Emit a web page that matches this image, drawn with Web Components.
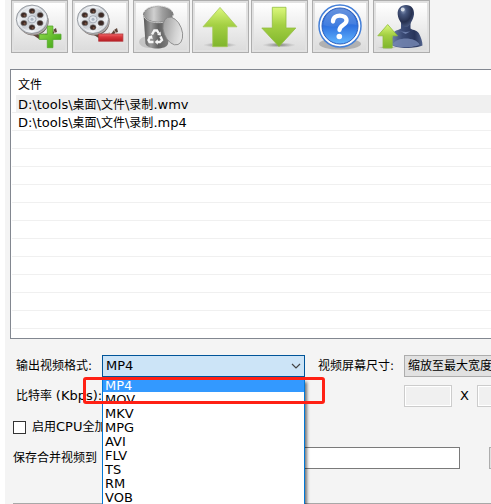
<!DOCTYPE html>
<html lang="zh-CN">
<head>
<meta charset="utf-8">
<title>视频合并</title>
<style>
  html { height: 100%; overflow: hidden; }
  body { margin: 0; min-height: 100%; overflow: hidden; background: #fff; color: #000;
    font: 12px/18px "DejaVu Sans", "Noto Sans CJK SC", sans-serif; }
</style>
</head>
<body>
<merge-window>
  <tool-bar slot="tools">
    <tool-button icon="add" label="添加"></tool-button>
    <tool-button icon="remove" label="移除"></tool-button>
    <tool-group>
      <tool-button icon="trash" label="清空"></tool-button>
      <tool-button icon="up" label="上移"></tool-button>
      <tool-button icon="down" label="下移"></tool-button>
    </tool-group>
    <tool-button icon="help" label="帮助"></tool-button>
    <tool-button icon="user" label="用户"></tool-button>
  </tool-bar>
  <file-list></file-list>
  <output-form></output-form>
</merge-window>

<script>
const define = (name, html, setup) => {
  const t = document.createElement('template');
  t.innerHTML = html;
  customElements.define(name, class extends HTMLElement {
    constructor() {
      super();
      this.attachShadow({ mode: 'open' }).append(t.content.cloneNode(true));
    }
    connectedCallback() { if (setup && !this.ready) { this.ready = true; setup(this, this.shadowRoot); } }
  });
};

define('merge-window', `
<style>
  :host { display: flex; flex-direction: column; gap: 16px; margin-left: 5px; padding-left: 5px;
    min-height: 100vh; box-sizing: border-box; background: #f4f4f4; overflow: hidden; }
</style>
<slot name="tools"></slot><slot></slot>`);

define('tool-bar', `
<style>:host { display: flex; gap: 4px; padding-left: 1px; }</style><slot></slot>`);
define('tool-group', `
<style>:host { display: flex; gap: 2px; }</style><slot></slot>`);

const green = `<linearGradient id="g" x1="0" y1="0" x2="0" y2="1"><stop offset="0" stop-color="#dcf87c"/><stop offset=".45" stop-color="#a4d043"/><stop offset="1" stop-color="#7fb52c"/></linearGradient>
<radialGradient id="sh"><stop offset="0" stop-color="#555" stop-opacity=".75"/><stop offset="1" stop-color="#888" stop-opacity="0"/></radialGradient>`;
const reel = `
<defs>
  <linearGradient id="m" x1="0" y1="0" x2="1" y2="1"><stop offset="0" stop-color="#aeb3ba"/><stop offset=".3" stop-color="#eceff3"/><stop offset=".5" stop-color="#c4c9d0"/><stop offset=".7" stop-color="#f0f2f5"/><stop offset="1" stop-color="#8e949d"/></linearGradient>
  <linearGradient id="p" x1="0" y1="0" x2="1" y2="1"><stop offset="0" stop-color="#9be052"/><stop offset="1" stop-color="#38a010"/></linearGradient>
  <linearGradient id="r" x1="0" y1="0" x2="0" y2="1"><stop offset="0" stop-color="#f06a6a"/><stop offset=".4" stop-color="#d8383c"/><stop offset="1" stop-color="#b81c22"/></linearGradient>
</defs>
<path d="M22 35c8 0 11-2 17-1l3-4 3-2 1 4-3 1-3 5-12 1z" fill="#5d4438"/>
<path d="M32 33l2 3M37 32l1 3M42 30l2 3" stroke="#d0b6a3" stroke-width="1"/>
<ellipse cx="22.600" cy="21.500" rx="15" ry="14" fill="#6b6260"/>
<ellipse cx="21.800" cy="20.500" rx="15.600" ry="14.300" fill="#b6aeaa"/>
<ellipse cx="21" cy="19.300" rx="15.700" ry="14.200" fill="url(#m)" stroke="#858a91" stroke-width=".8"/>
<ellipse cx="21" cy="19.300" rx="13.800" ry="12.400" fill="none" stroke="#f8f9fa" stroke-width=".7"/>
<g fill="#3c2925" stroke="#777" stroke-width=".6"><ellipse cx="21" cy="11" rx="3" ry="2.600"/><ellipse cx="12.800" cy="15" rx="3" ry="2.600"/><ellipse cx="29.200" cy="15" rx="3" ry="2.600"/><ellipse cx="12.900" cy="23" rx="3" ry="2.600"/><ellipse cx="29" cy="23" rx="3" ry="2.600"/><ellipse cx="21" cy="27.300" rx="3" ry="2.600"/></g>
<g fill="#76503f"><circle cx="21.500" cy="11.800" r="1.100"/><circle cx="13.600" cy="15.600" r="1.100"/><circle cx="13.600" cy="23.700" r="1.100"/><circle cx="21.700" cy="28" r="1.100"/></g>
<ellipse cx="21" cy="19.300" rx="4" ry="3.600" fill="#dfe4ea" stroke="#9aa2ad" stroke-width=".8"/><circle cx="21" cy="19.300" r="1.500" fill="#a9b3c0"/>`;

const icons = {
  add: reel + `<path d="M36.3 26h5.600v8.200H50v5.200h-8.100v8.300h-5.600v-8.300h-8.100v-5.200h8.100z" fill="url(#p)" stroke="#54a82c" stroke-width=".8"/>`,
  remove: reel + `<rect x="26.700" y="34" width="24.200" height="7.200" fill="url(#r)" stroke="#b5383c" stroke-width=".8"/>`,
  trash: `
<defs>
  <linearGradient id="b"><stop offset="0" stop-color="#555"/><stop offset=".25" stop-color="#999"/><stop offset=".5" stop-color="#626262"/><stop offset="1" stop-color="#8a8a8a"/></linearGradient>
  <linearGradient id="i"><stop offset="0" stop-color="#8d8d8d"/><stop offset=".35" stop-color="#d0d0d0"/><stop offset=".65" stop-color="#9d9d9d"/><stop offset="1" stop-color="#777"/></linearGradient>
  <linearGradient id="l" x1="0" y1="0" x2="1" y2="1"><stop offset="0" stop-color="#8f8f8f"/><stop offset=".6" stop-color="#d3d3d3"/><stop offset="1" stop-color="#f5f5f5"/></linearGradient>
</defs>
<ellipse cx="16" cy="42" rx="10" ry="6" fill="#999" opacity=".4"/>
<path d="M10.500 14L12.500 43.500c1 3.500 6 5 11.500 5s10-1.500 11-4.500L40 14z" fill="url(#b)"/>
<ellipse cx="25.300" cy="14.300" rx="14.800" ry="8" fill="url(#i)" stroke="#808080" stroke-width="1"/>
<path d="M11 12c3-8 25-8 28.600 0" fill="none" stroke="#ddd" stroke-width="1"/>
<path d="M10.600 15c1 10 28 10.500 29.400 0" fill="none" stroke="#c4c4c4" stroke-width="1"/>
<ellipse cx="39.800" cy="31" rx="9" ry="14.500" transform="rotate(-21 39.800 31)" fill="url(#l)" stroke="#858585" stroke-width=".8"/>
<g fill="none" stroke="#f5f5f5" stroke-width="2.400"><path d="M19 34.500l2.300-4h2.700l1.800 3"/><path d="M27.500 36.500l1.500 3.500-2 2h-3"/><path d="M20.500 42h-4l-1-2 2-3.500"/></g>
<path d="M24 35l4 .5-.5-4zM24.800 39.300v5.400l-3-2.700zM14.700 37l4.300-1.800.7 4z" fill="#f5f5f5"/>`,
  up: `<defs>${green}</defs><ellipse cx="28" cy="45" rx="17" ry="2.600" fill="url(#sh)"/><path d="M28 7.400l17 19.400h-9.700v19.900H20.700V26.800H11z" fill="url(#g)" stroke="#a6c95a" stroke-width=".8"/>`,
  down: `<defs>${green}</defs><ellipse cx="28" cy="45" rx="17" ry="2.600" fill="url(#sh)"/><path d="M21.300 7.300H35V28h9.800L28 46.600 10.800 28h10.500z" fill="url(#g)" stroke="#92bd43" stroke-width=".8"/>`,
  help: `
<defs><linearGradient id="h" x1="0" y1="0" x2="0" y2="1"><stop offset="0" stop-color="#2e63c4"/><stop offset=".5" stop-color="#2f72e0"/><stop offset="1" stop-color="#62b6ff"/></linearGradient>
<linearGradient id="k" x1="0" y1="0" x2="0" y2="1"><stop offset="0" stop-color="#8cb2ee"/><stop offset="1" stop-color="#4a83e0"/></linearGradient></defs>
<ellipse cx="28" cy="44" rx="21" ry="5.500" fill="#777" opacity=".45"/>
<circle cx="28" cy="26" r="21" fill="#fff" stroke="#4580d8" stroke-width="1.500"/>
<circle cx="28" cy="26" r="18" fill="url(#h)" stroke="#2c5fbd" stroke-width="1"/>
<path d="M11.500 25a16.500 16.500 0 0 1 33 0c-9-3-20 5-33 0z" fill="url(#k)" opacity=".6"/>
<path d="M21 21.500c0-8 13.500-7.500 13.500-1 0 4.500-7 4.500-7 9.500" fill="none" stroke="#fff" stroke-width="4.300" stroke-linecap="round"/><circle cx="27.300" cy="36.500" r="2.800" fill="#fff"/>`,
  user: `
<defs>${green}
<radialGradient id="hd" cx=".35" cy=".25" r=".8"><stop offset="0" stop-color="#8d9dbd"/><stop offset=".25" stop-color="#46567d"/><stop offset=".65" stop-color="#26304f"/><stop offset="1" stop-color="#4c5d85"/></radialGradient>
<linearGradient id="bd"><stop offset="0" stop-color="#6d80aa"/><stop offset=".35" stop-color="#3b4b76"/><stop offset=".75" stop-color="#28345a"/><stop offset="1" stop-color="#53648e"/></linearGradient></defs>
<path d="M28 22h9.500v6.500c3 2 7 1.800 8.500 5 2 4 3.500 8 3.500 12-6 3-25 3.500-30.500 0-.5-5 0-11 2.500-14 2-1.800 5-1.500 6.500-3z" fill="url(#bd)"/>
<path d="M19.500 44.500c4-8 23-8 27 0-5 3.500-22 4-27 0z" fill="#7486b2" opacity=".85"/>
<path d="M25.500 30c3 2.500 12 2.500 14.500 0l-7.500 4z" fill="#6b7da9"/>
<path d="M33 5c5.500 0 8.500 4 8 9.500-.5 3-1.500 5.500-3 8-1 2.500-3 4.500-5 4.500s-4-2-5.200-4.500c-1.600-2.500-2.800-5-3.100-8C24.200 9 27.500 5 33 5z" fill="url(#hd)"/>
<ellipse cx="29.700" cy="9.500" rx="2" ry="2" fill="#eef2f8" opacity=".8"/>
<ellipse cx="14.500" cy="47.500" rx="10" ry="1.500" fill="url(#sh)"/>
<path d="M14.700 24.500L24.500 35.800H19.200V48H10V35.800H4.800z" fill="url(#g)" stroke="#8fbd3c" stroke-width=".8"/>`
};

define('tool-button', `
<style>
  :host { display: block; }
  button { display: block; margin: 0; padding: 2px; border: 1px solid #adadad; background: #e1e1e1; }
  svg { display: block; width: 51px; height: 47px; background: linear-gradient(#fff, #dcdcdc); }
</style>
<button type="button"></button>`, (host, root) => {
  const b = root.querySelector('button');
  b.setAttribute('aria-label', host.getAttribute('label'));
  b.innerHTML = `<svg viewBox="3 3 51 47" aria-hidden="true">${icons[host.getAttribute('icon')]}</svg>`;
});

define('file-list', `
<style>
  :host { display: block; border: 1px solid #828790; border-right: 0; background: #fff; padding: 0 0 9px 1px; }
  table { width: 100%; border-collapse: separate; border-spacing: 0; table-layout: fixed; }
  th, td { box-sizing: border-box; padding: 0 0 0 4px; height: 18px; line-height: 19px; text-align: left;
    font-weight: 400; white-space: nowrap; border-bottom: 1px solid #f0f0f0; }
  th { height: 25px; line-height: 19px; border: 0; padding: 6px 0 0 6px; }
  td > div { height: 17px; padding-left: 2px; font-size: 13px; }
  .selected td > div { background: #f0f0f0; }
  span { font-size: 12px; }
</style>
<table>
  <thead><tr><th scope="col">文件</th></tr></thead>
  <tbody>
    <tr class="selected"><td><div>D:\\tools\\<span>桌面</span>\\<span>文件</span>\\<span>录制</span>.wmv</div></td></tr>
    <tr><td><div>D:\\tools\\<span>桌面</span>\\<span>文件</span>\\<span>录制</span>.mp4</div></td></tr>
  </tbody>
</table>`, (host, root) => {
  const body = root.querySelector('tbody');
  for (let i = 0; i < 11; i++) body.insertRow().insertCell();
});

define('combo-field', `
<style>
  :host { display: grid; grid-template-columns: 86px minmax(0, 1fr); align-items: center; position: relative; white-space: nowrap; }
  select { appearance: none; width: 100%; height: 22px; margin: 0; padding: 0 3px; box-sizing: border-box;
    border: 1px solid #adadad; border-radius: 0; background: #e1e1e1; color: #000; font: inherit; outline: 0; }
  svg, ul { display: none; }
  :host([open]) select { background: #cce4f7; border-color: #005499; font-size: 13px; }
  :host([open]) svg { display: block; position: absolute; right: 4px; top: 7px; width: 10px; height: 8px; pointer-events: none; }
  :host([open]) ul { display: block; position: absolute; z-index: 1; top: 22px; left: 86px; right: 0; margin: 0; padding: 0;
    list-style: none; border: 1px solid #0078d7; background: #fff; box-shadow: 3px 4px 3px -1px #0008; }
  li { height: 14px; line-height: 16px; padding: 0 2px; font-size: 13px; }
  li[aria-selected=true] { background: #3399ff; color: #fff; }
</style>
<label for="c"><slot></slot></label><select id="c"></select>
<svg viewBox="0 0 10 8" aria-hidden="true"><path d="M1 2l4 4 4-4" fill="none" stroke="#444" stroke-width="1.200"/></svg>
<ul role="listbox" aria-label="选项"></ul>`, (host, root) => {
  const values = host.getAttribute('options').split(',');
  for (const v of values) {
    root.querySelector('select').add(new Option(v));
    if (!host.hasAttribute('open')) continue;
    const li = document.createElement('li');
    li.setAttribute('role', 'option');
    li.setAttribute('aria-selected', v === values[0]);
    li.textContent = v;
    root.querySelector('ul').append(li);
  }
});

define('highlight-frame', `
<style>
  :host { display: block; position: absolute; z-index: 2; left: 73px; top: 22px; width: 242px; height: 27px;
    box-sizing: border-box; border: 3px solid #ff2014; border-radius: 3px; pointer-events: none; }
</style>`);

define('output-form', `
<style>
  :host { display: block; position: relative; }
  form { display: grid; gap: 8px; margin: 0; }
  .row { display: grid; grid-template-columns: 86px minmax(0, 7fr) 99px minmax(0, 3fr); align-items: center;
    height: 22px; padding-left: 6px; white-space: nowrap; }
  .row combo-field { grid-column: span 2; }
  .row combo-field + combo-field { margin: 0 -24px 0 13px; }
  input { box-sizing: border-box; height: 22px; margin: 0; padding: 0 4px; border-radius: 0; font: inherit; }
  .latin { font-size: 13px; }
  .size { grid-column: 4; display: flex; align-items: center; }
  .size input { flex: none; width: 48px; border: 1px solid #ccc; background: #f0f0f0; box-shadow: inset 0 0 0 1px #fff; }
  .size span { flex: none; width: 25px; text-align: center; font-size: 13px; }
  .check { display: flex; gap: 6px; height: 24px; padding-left: 3px; }
  .check input { appearance: none; width: 13px; height: 13px; padding: 0; border: 1px solid #333; background: #fff; }
  .save { display: flex; padding-left: 3px; }
  .save label { flex: none; width: 89px; }
  .save input { flex: 1; min-width: 0; border: 1px solid #7a7a7a; background: #fff; }
  .save button { flex: none; width: 30px; height: 22px; margin: 0 -28px 0 29px; padding: 0; border: 1px solid #adadad; background: #e1e1e1; }
  hr { height: 1px; margin: 34px 0 0 3px; border: 0; background: #a8a8a8; }
</style>
<form>
  <div class="row">
    <combo-field open options="MP4,MOV,MKV,MPG,AVI,FLV,TS,RM,VOB">输出视频格式:</combo-field>
    <combo-field options="缩放至最大宽度">视频屏幕尺寸:</combo-field>
  </div>
  <div class="row">
    <span>比特率 <span class="latin">(Kbps):</span></span>
    <div class="size"><input aria-label="宽度" disabled><span>X</span><input aria-label="高度" disabled></div>
  </div>
  <div class="row check"><input type="checkbox" id="cpu"><label for="cpu">启用<span class="latin">CPU</span>全加</label></div>
  <div class="row save"><label for="path">保存合并视频到</label><input id="path" type="text"><button type="button" aria-label="浏览"></button></div>
</form>
<hr>
<highlight-frame></highlight-frame>`);
</script>
</body>
</html>
